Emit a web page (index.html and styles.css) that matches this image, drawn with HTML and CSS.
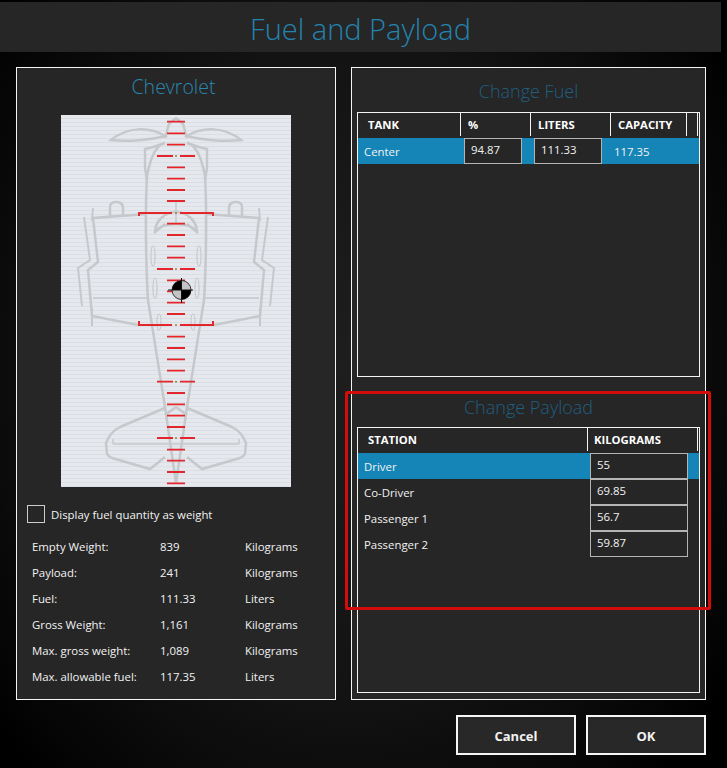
FILE: index.html
```html
<!DOCTYPE html>
<html lang="en">
<head>
    <meta charset="UTF-8">
    <title>Fuel and Payload</title>
    <link rel="stylesheet" href="styles.css">
</head>
<body>
    <div class="titlebar"><h1>Fuel and Payload</h1></div>

    <div class="main">
        <div class="panel left">
            <h2 class="name">Chevrolet</h2>
            <div class="plane">
                <svg width="230" height="372" viewBox="61 115 230 372">
                    <defs>
                        <g id="halfplane">
                            <!-- prop blade -->
                            <path d="M165 136 C150 127 128 126 111 140 C128 142 150 140 165 136Z"/>
                            <!-- nose and cowl -->
                            <path d="M165 138 L169 124 L176 118"/>
                            <path d="M165 143 L153 147 L145 149 L145 168 L147 180"/>
                            <path d="M165 143 C155 145 150 160 147 176"/>
                            <!-- body -->
                            <path d="M147 176 C145 210 146 270 148 300 L165 407 L176 483"/>
                            <!-- wing -->
                            <path d="M147 214 L93 218 L98 262 L88 270 L92 316 L138 325"/>
                            <path d="M84 217 L90 260 L78 268 L82 306" stroke-width="2"/>
                            <path d="M93 208 L92 221" stroke-width="2"/>
                            <path d="M92 308 L92 326" stroke-width="2"/>
                            <path d="M93 298 L147 298" stroke-width="1.5"/>
                            <!-- door bump -->
                            <path d="M110 216 L110 207 Q110 202 116 202 Q123 202 123 208 L123 215"/>
                            <!-- windshield -->
                            <path d="M176 212 C164 212 155 222 155 232 L165 224"/>
                            <path d="M176 224 C166 224 159 226 155 232"/>
                            <!-- caps -->
                            <ellipse cx="153" cy="256" rx="2" ry="10" stroke-width="1.2"/>
                            <ellipse cx="155" cy="288" rx="2" ry="10" stroke-width="1.2"/>
                            <ellipse cx="159" cy="322" rx="2" ry="8" stroke-width="1.2"/>
                            <!-- tail -->
                            <path d="M165 408 L120 427 Q110 432 106 443 L107 454 Q108 456 112 458 L150 469 L165 457"/>
                            <path d="M113 444 L176 444 M113 439 L113 444" stroke-width="1.5"/>
                            <path d="M165 415 L176 407"/>
                        </g>
                    </defs>
                    <g fill="none" stroke="#c6c9cc" stroke-width="2.5">
                        <use href="#halfplane"/>
                        <use href="#halfplane" transform="translate(352 0) scale(-1 1)"/>
                        <path d="M176 201 L176 223" stroke-width="1.5"/>
                    </g>
                    <path stroke="#e2262c" stroke-width="1.8" fill="none" d="M167 121.7H185M167 133.3H185M167 144.7H185M157 156H173M180 156H195M167 167.3H185M167 178.7H185M167 190H185M167 201H185M167 223.7H185M167 235H185M167 246.3H185M167 257.7H185M157 269H173M180 269H195M167 280.3H185M167 291.3H185M167 302.700H185M167 314H185M167 336.7H185M167 348H185M167 359.3H185M167 370.7H185M157 381.7H173M180 381.7H195M167 393H185M167 404.3H185M167 415.7H185M167 427H185M157 438H173M180 438H195M167 449.7H185M167 460.7H185M167 472H185M167 483.3H185"/>
                    <path stroke="#e2262c" stroke-width="2" fill="none" d="M139 216V213H172M180 213H213V216M139 321V325H172M180 325H213V321"/>
                    <path stroke="#a08030" stroke-width="1.500" fill="none" d="M175 156H177M175 213H177M175 269H177M175 325H177M175 381.700H177M175 438H177"/>
                    <circle cx="181.500" cy="290" r="9.500" fill="#c4c4c4" stroke="#333" stroke-width="1"/>
                    <path d="M181.500 290V280.500A9.500 9.500 0 0 0 172 290Z M181.500 290V299.500A9.500 9.500 0 0 0 191 290Z" fill="#000"/>
                    <path stroke="#111" stroke-width="1" fill="none" d="M181.500 278V303M168 290H193"/>
                </svg>
            </div>
            <label class="check"><span class="box"></span>Display fuel quantity as weight</label>
            <div class="stats">
                <span>Empty Weight:</span><span>839</span><span>Kilograms</span>
                <span>Payload:</span><span>241</span><span>Kilograms</span>
                <span>Fuel:</span><span>111.33</span><span>Liters</span>
                <span>Gross Weight:</span><span>1,161</span><span>Kilograms</span>
                <span>Max. gross weight:</span><span>1,089</span><span>Kilograms</span>
                <span>Max. allowable fuel:</span><span>117.35</span><span>Liters</span>
            </div>
        </div>

        <div class="panel right">
            <h2 class="sub first">Change Fuel</h2>
            <div class="table">
                <div class="head fuelcols">
                    <div class="th">TANK</div>
                    <div class="th">%</div>
                    <div class="th">LITERS</div>
                    <div class="th">CAPACITY</div>
                    <div class="th"></div>
                </div>
                <div class="tr fuelcols selected">
                    <div class="td">Center</div>
                    <div class="cell"><input class="pct" value="94.87"></div>
                    <div class="cell"><input class="ltr" value="111.33"></div>
                    <div class="cap">117.35</div>
                </div>
            </div>

            <h2 class="sub">Change Payload</h2>
            <div class="table paytable">
                <div class="head paycols">
                    <div class="th">STATION</div>
                    <div class="th">KILOGRAMS</div>
                </div>
                <div class="tr paycols selected">
                    <div class="td">Driver</div>
                    <div class="cell"><input class="kg" value="55"></div>
                </div>
                <div class="tr paycols">
                    <div class="td">Co-Driver</div>
                    <div class="cell"><input class="kg" value="69.85"></div>
                </div>
                <div class="tr paycols">
                    <div class="td">Passenger 1</div>
                    <div class="cell"><input class="kg" value="56.7"></div>
                </div>
                <div class="tr paycols">
                    <div class="td">Passenger 2</div>
                    <div class="cell"><input class="kg" value="59.87"></div>
                </div>
            </div>
        </div>
    </div>

    <div class="footer">
        <button>Cancel</button>
        <button>OK</button>
    </div>

    <div class="callout"></div>
</body>
</html>
```

FILE: styles.css
```css
*
{
    box-sizing: border-box;
}
html, body
{
    height: 100%;
}
body
{
    margin: 0;
    padding-top: 2px;
    overflow: hidden;
    color: #f2f2f2;
    font-family: "Open Sans", "Noto Sans", sans-serif;
    font-size: 11.4px;
    background: radial-gradient(ellipse 460px 560px at 48% 48%, #1e1e1e 0, #121212 60%, #050505 90%, #000 100%);
}
.titlebar
{
    width: 721px;
    height: 50px;
    padding-top: 2px;
    background: #262626;
    display: flex;
    align-items: center;
    justify-content: center;
}
.titlebar h1
{
    margin: 0;
    font-size: 29px;
    font-weight: 300;
    color: #2484b0;
}
.main
{
    display: flex;
    gap: 15px;
    margin-top: 15px;
    padding-left: 16px;
}
.panel
{
    height: 633px;
    background: #262626;
    border: 1px solid #f4f4f4;
}
.left
{
    width: 320px;
    padding-top: 6px;
}
.right
{
    width: 355px;
    padding: 10px 5px 0;
}
h2
{
    margin: 0;
    height: 26px;
    line-height: 26px;
    text-align: center;
    font-weight: 400;
}
.name
{
    padding-right: 5px;
    font-size: 19.5px;
    font-weight: 300;
    color: #2a86b0;
}
.sub
{
    margin-top: 17px;
    font-size: 18px;
    font-weight: 300;
    color: #1f5f80;
}
.sub.first
{
    margin-top: 0;
}
.plane
{
    width: 230px;
    height: 372px;
    margin: 15px auto 0;
    background: repeating-linear-gradient(180deg, #e5e8ed 0, #e5e8ed 3px, #dbdfe5 3px, #dbdfe5 4px);
}
.plane svg
{
    display: block;
}
.check
{
    display: flex;
    align-items: center;
    height: 18px;
    margin-top: 18px;
    padding-left: 10px;
}
.box
{
    width: 18px;
    height: 18px;
    margin-right: 6px;
    border: 1px solid #ccc;
}
.stats
{
    display: grid;
    grid-template-columns: 128px 85px auto;
    grid-auto-rows: 26px;
    align-items: center;
    margin-top: 10px;
    padding-left: 15px;
}
.table
{
    height: 265px;
    margin-top: 8px;
    border: 1px solid #f4f4f4;
}
.paytable
{
    height: 266px;
    margin-top: 7px;
}
.head
{
    height: 25px;
    font-weight: 700;
    font-size: 11.3px;
    color: #fff;
}
.th
{
    height: 23px;
    line-height: 23px;
    padding-left: 7px;
    border-right: 1px solid #f4f4f4;
}
.th:first-child
{
    padding-left: 10px;
}
.paycols .th:last-child
{
    padding-left: 6px;
}
.fuelcols
{
    display: grid;
    grid-template-columns: 103px 70px 80px 76px 11px;
}
.paycols
{
    display: grid;
    grid-template-columns: 230px 110px;
}
.tr
{
    height: 26px;
    align-items: center;
}
.selected
{
    background: #1585b8;
}
.td
{
    padding-left: 6px;
}
.cell
{
    height: 26px;
}
.cap
{
    padding-left: 3px;
}
input
{
    display: block;
    height: 26px;
    padding: 0 0 3px 6px;
    color: #f2f2f2;
    background: #262626;
    border: 1px solid #b4b4b4;
    border-radius: 0;
    outline: 0;
    font-family: inherit;
    font-size: 11.4px;
}
.pct
{
    width: 58px;
    margin-left: 3px;
}
.ltr
{
    width: 68px;
    margin-left: 3px;
}
.kg
{
    width: 98px;
    margin-left: 2px;
}
.footer
{
    display: flex;
    justify-content: flex-end;
    gap: 10px;
    margin-top: 15px;
    padding-right: 21px;
}
.footer button
{
    width: 120px;
    height: 40px;
    padding-top: 2px;
    color: #f2f2f2;
    background: #282828;
    border: 2px solid #f6f6f6;
    font-family: inherit;
    font-size: 13px;
    font-weight: 700;
}
.callout
{
    position: absolute;
    left: 345px;
    top: 391px;
    width: 366px;
    height: 219px;
    border: 3px solid #d40c0c;
    border-radius: 2px;
}
```
